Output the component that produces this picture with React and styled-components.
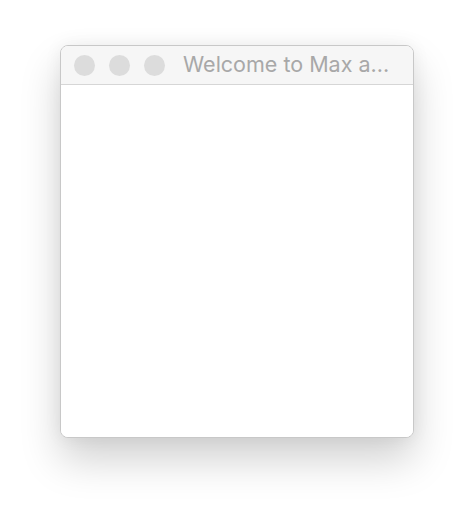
import React from "react";
import styled, { createGlobalStyle } from "styled-components";

const GlobalStyle = createGlobalStyle`
  html, body {
    margin: 0;
    padding: 0;
    background: #ffffff;
  }
  body {
    font-family: Inter, "Liberation Sans", Arial, sans-serif;
  }
`;

const Page = styled.div`
  width: 474px;
  height: 512px;
  padding: 45px 0 0 60px;
  box-sizing: border-box;
`;

const Window = styled.div`
  width: 354px;
  height: 393px;
  box-sizing: border-box;
  border: 1px solid #c8c8c8;
  border-radius: 8px;
  background: #ffffff;
  overflow: hidden;
  display: flex;
  flex-direction: column;
  box-shadow: 0 22px 40px rgba(0, 0, 0, 0.18), 0 0 18px rgba(0, 0, 0, 0.06);
`;

const TitleBar = styled.div`
  height: 38px;
  flex-shrink: 0;
  display: flex;
  align-items: center;
  padding-left: 13px;
  gap: 14px;
  background: #f6f6f6;
  border-bottom: 1px solid #d6d6d6;
`;

const Light = styled.span`
  width: 21px;
  height: 21px;
  border-radius: 50%;
  background: #dcdcdc;
  flex-shrink: 0;
`;

const Title = styled.span`
  margin-left: 4px;
  font-size: 21.5px;
  line-height: 1;
  color: #a8a8a8;
  white-space: nowrap;
`;

const Content = styled.div`
  flex: 1;
  background: #ffffff;
`;

export default function App() {
  return (
    <>
      <GlobalStyle />
      <Page>
        <Window>
          <TitleBar>
            <Light />
            <Light />
            <Light />
            <Title>Welcome to Max a...</Title>
          </TitleBar>
          <Content />
        </Window>
      </Page>
    </>
  );
}
